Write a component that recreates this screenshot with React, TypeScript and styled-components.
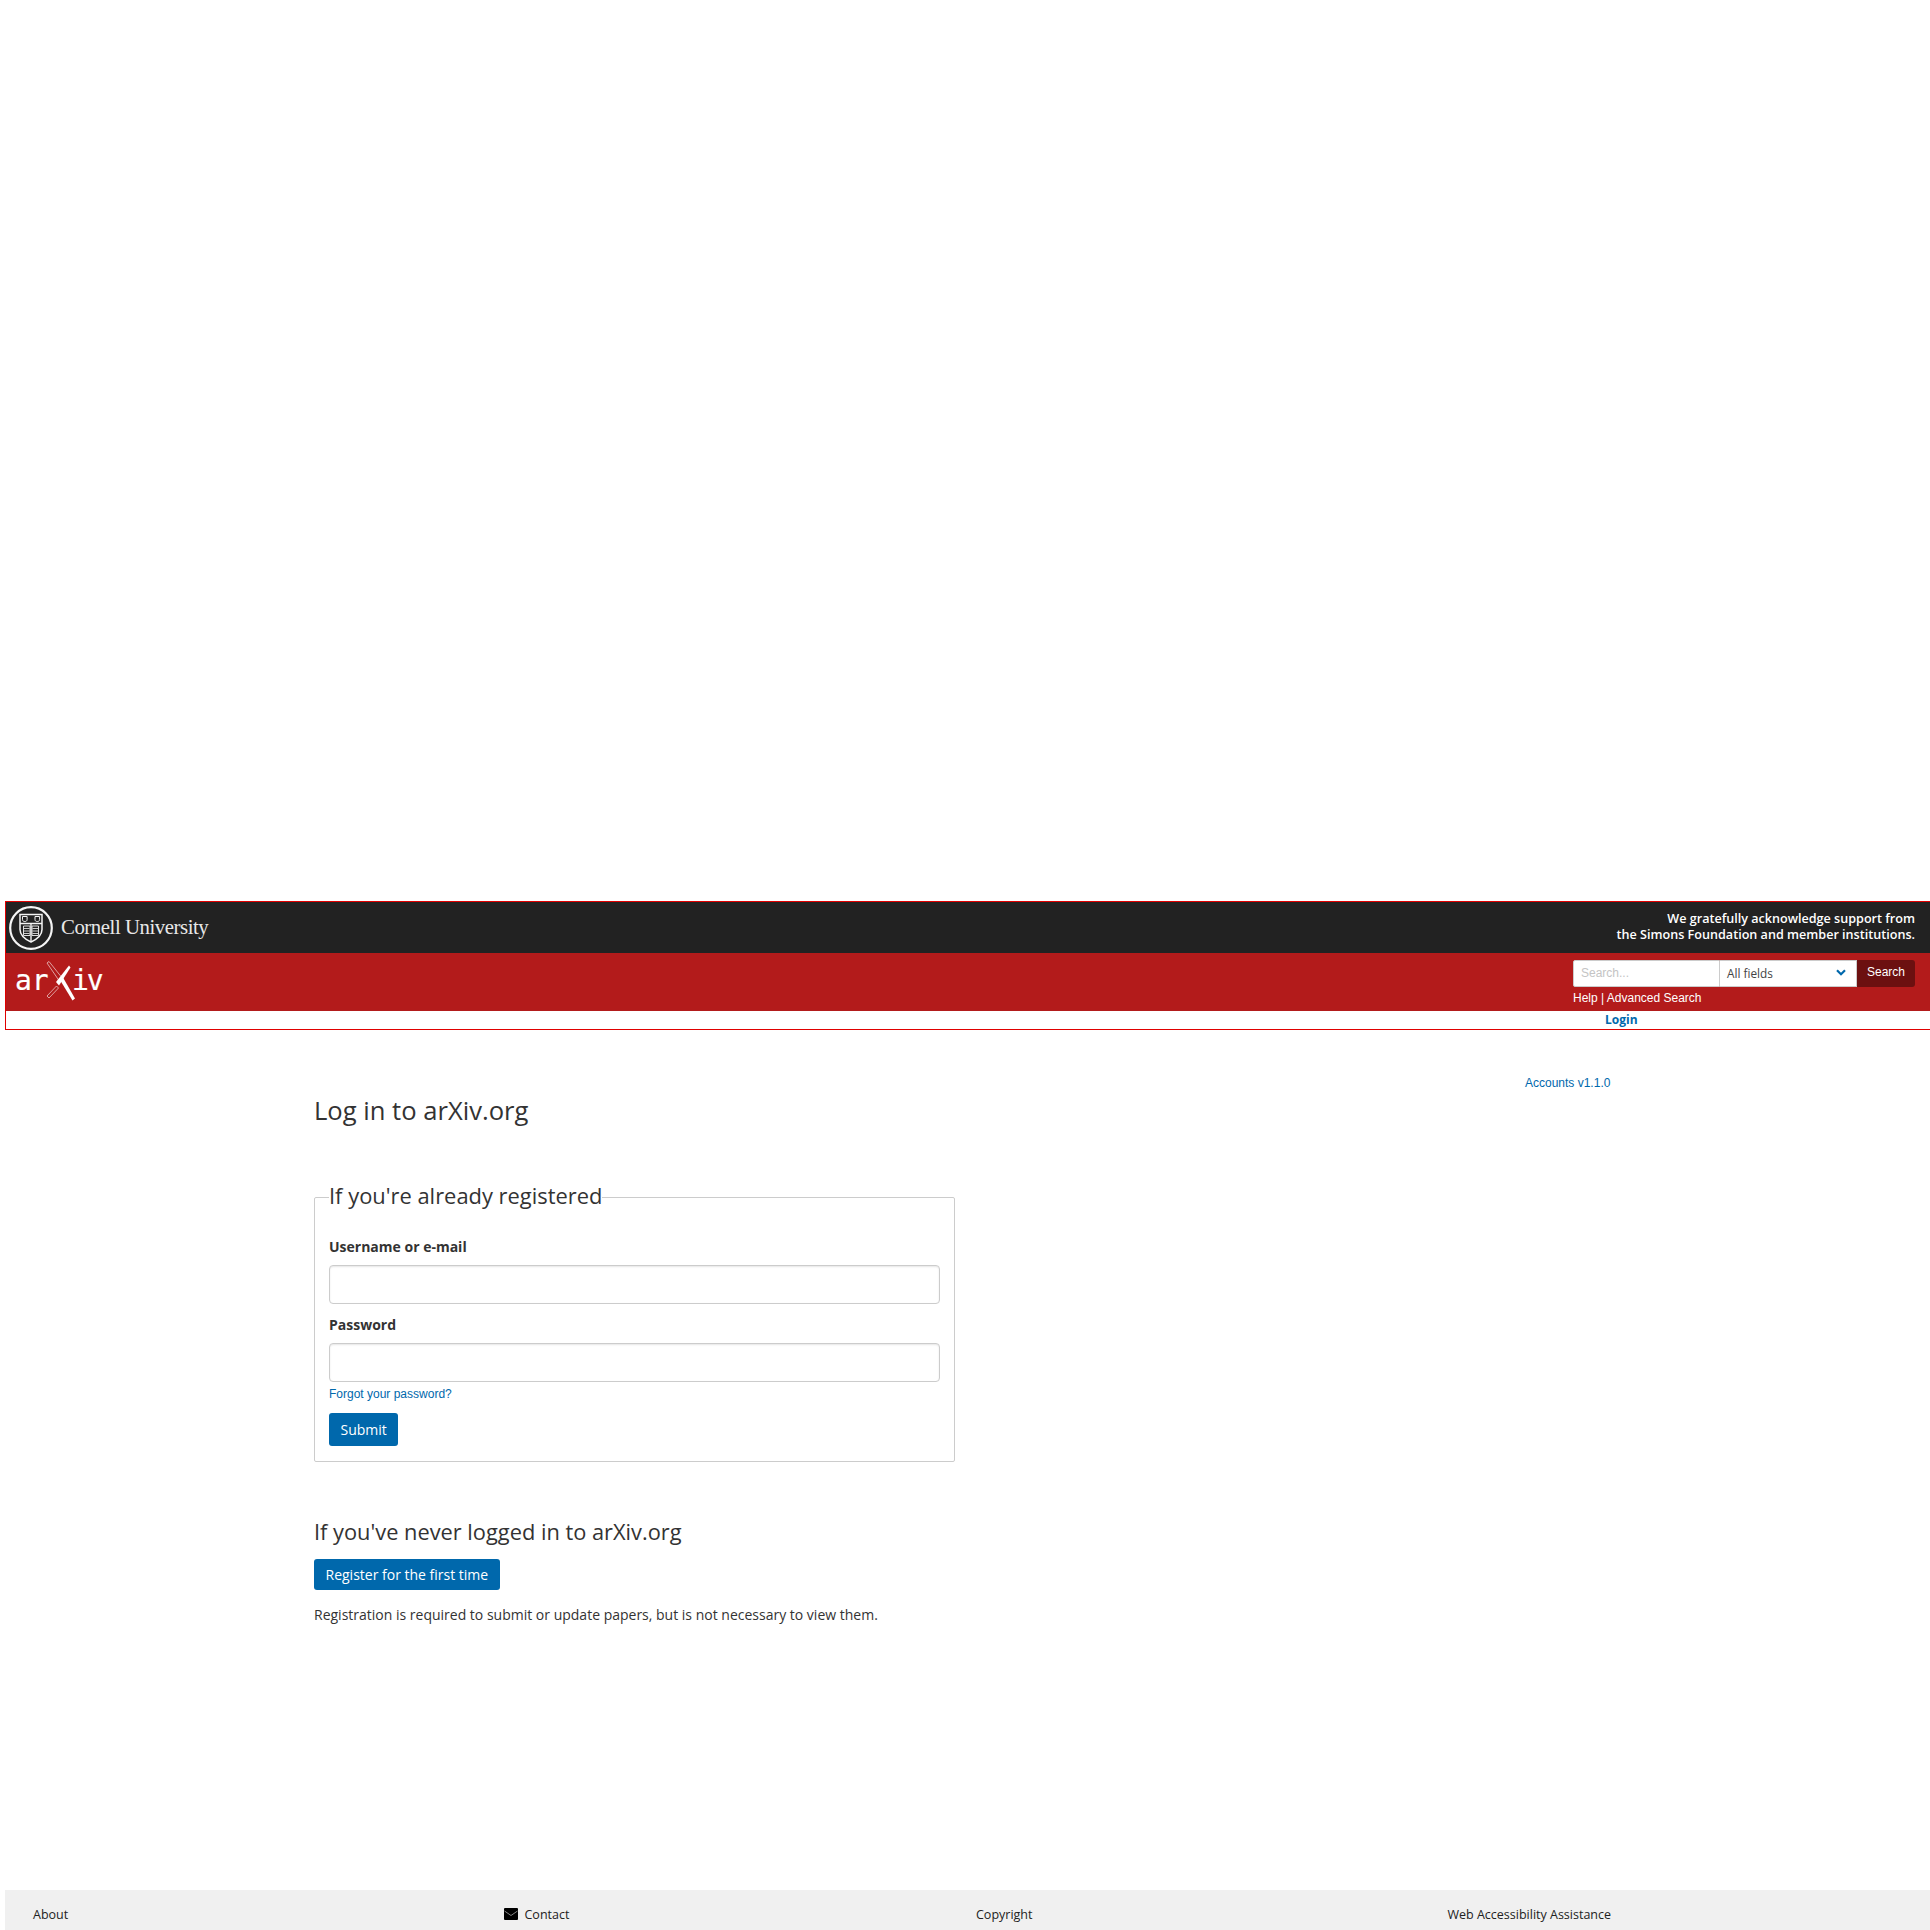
import React from 'react';
import styled, { createGlobalStyle } from 'styled-components';

const GlobalStyle = createGlobalStyle`
  html, body {
    margin: 0;
    padding: 0;
    background: #fff;
    overflow: hidden;
  }
  body {
    height: 1930px;
    font-family: "Open Sans", "Liberation Sans", sans-serif;
    color: #333;
  }
`;

const Page = styled.div`
  width: 1925px;
  height: 1930px;
  margin-left: 5px;
  padding-top: 901px;
  box-sizing: border-box;
  display: flex;
  flex-direction: column;
`;

const Header = styled.header`
  border: 1px solid #e00000;
  border-right: none;
`;

const TopBand = styled.div`
  height: 51px;
  background: #222;
  display: flex;
  justify-content: space-between;
  align-items: center;
  padding-right: 15px;
`;

const Cornell = styled.div`
  display: flex;
  align-items: center;
  gap: 7px;
  padding-left: 2px;
`;

const CornellName = styled.span`
  font-family: "Liberation Serif", serif;
  font-size: 20.8px;
  letter-spacing: -0.45px;
  color: #e8e8e8;
  padding-bottom: 2px;
`;

const Thanks = styled.div`
  color: #fff;
  font-size: 12.6px;
  font-weight: 600;
  line-height: 16px;
  text-align: right;
  padding-bottom: 1px;
`;

const RedBand = styled.div`
  height: 58px;
  background: #b31b1b;
  display: flex;
  justify-content: space-between;
  padding-right: 15px;
`;

const LogoSlot = styled.div`
  padding: 6px 0 0 6px;
`;

const SearchArea = styled.div`
  padding-top: 7px;
  width: 342px;
`;

const SearchRow = styled.div`
  display: flex;
  height: 27px;
`;

const SearchInput = styled.div`
  width: 147px;
  box-sizing: border-box;
  background: #fff;
  border: 1px solid #ccc;
  border-radius: 2px 0 0 2px;
  padding-left: 7px;
  font: 12px/25px "Liberation Sans", sans-serif;
  color: #c4c4c4;
`;

const FieldSelect = styled.div`
  width: 137px;
  box-sizing: border-box;
  background: #fff;
  border: 1px solid #ccc;
  border-left: none;
  padding: 0 10px 2px 7px;
  display: flex;
  align-items: center;
  justify-content: space-between;
  font-size: 11.8px;
  color: #444;
`;

const SearchButton = styled.div`
  width: 58px;
  background: #6c1010;
  border-radius: 0 3px 3px 0;
  color: #fff;
  font: 12px/24px "Liberation Sans", sans-serif;
  text-align: center;
`;

const SearchLinks = styled.div`
  margin-top: 4px;
  color: #fff;
  font: 12px/14px "Liberation Sans", sans-serif;
`;

const LoginBand = styled.div`
  height: 18px;
  padding-left: 1599px;
  font-size: 12px;
  font-weight: 700;
  line-height: 18px;
  color: #0068ac;
`;

const Main = styled.main`
  flex: 1;
  padding: 64px 0 0 309px;
  position: relative;
`;

const Version = styled.a`
  position: absolute;
  left: 1520px;
  top: 46px;
  font: 12px/14px "Liberation Sans", sans-serif;
  color: #0068ac;
`;

const Title = styled.h1`
  margin: 0;
  font-size: 25.6px;
  line-height: 34px;
  font-weight: 500;
  color: #333;
`;

const Panel = styled.fieldset`
  width: 641px;
  box-sizing: border-box;
  margin: 53px 0 0;
  padding: 0 14px 15px;
  border: 1px solid #ccc;
  border-radius: 2px;
`;

const PanelTitle = styled.legend`
  padding: 0 0 2px;
  font-size: 21.9px;
  line-height: 30px;
  font-weight: 500;
  color: #333;
`;

const FieldLabel = styled.label`
  display: block;
  margin-top: 24px;
  font-size: 14px;
  line-height: 20px;
  font-weight: 700;
  color: #333;

  & + div {
    margin-top: 8px;
  }
`;

const PasswordLabel = styled(FieldLabel)`
  margin-top: 11px;
`;

const TextBox = styled.div`
  height: 39px;
  box-sizing: border-box;
  border: 1px solid #ccc;
  border-radius: 4px;
  box-shadow: inset 0 1px 2px rgba(10, 10, 10, 0.1);
  background: #fff;
`;

const Forgot = styled.a`
  display: block;
  margin-top: 5px;
  font: 12px/14px "Liberation Sans", sans-serif;
  color: #0068ac;
`;

const BlueButton = styled.button`
  display: block;
  border: none;
  border-radius: 3px;
  background: #0068ac;
  color: #fff;
  font-family: "Open Sans", sans-serif;
  font-size: 14px;
  padding: 0 11.5px;
`;

const SubmitButton = styled(BlueButton)`
  height: 33px;
  margin-top: 12px;
`;

const RegisterHeading = styled.h2`
  margin: 55px 0 0;
  font-size: 21.8px;
  line-height: 30px;
  font-weight: 500;
  color: #333;
`;

const RegisterButton = styled(BlueButton)`
  height: 31px;
  margin-top: 12px;
`;

const Note = styled.p`
  margin: 15px 0 0;
  font-size: 14px;
  line-height: 20px;
  color: #333;
`;

const Footer = styled.footer`
  height: 40px;
  background: #f0f0f0;
  display: grid;
  grid-template-columns: repeat(4, 471.5px);
  padding-left: 28px;
`;

const FooterItem = styled.a`
  display: flex;
  align-items: center;
  gap: 7px;
  height: 100%;
  padding-top: 8px;
  box-sizing: border-box;
  font-size: 12.5px;
  color: #222;
`;

const EnvelopeIcon = styled.svg`
  width: 14px;
  height: 12px;
  margin-left: -1px;
`;

const CornellSeal = () => (
  <svg width="46" height="46" viewBox="0 0 46 46" fill="none" stroke="#f4f4f4">
    <circle cx="23" cy="23" r="20.800" strokeWidth="2.200" />
    <path d="M12 9.500h22v15c0 6-4.500 9.500-11 12.500-6.500-3-11-6.500-11-12.500z" strokeWidth="1.500" />
    <path d="M12 18.500h22M23 18.500v18" strokeWidth="1.400" />
    <path d="M14.500 11.500v3c0 1.500 1 2 2.300 2s2.300-.5 2.300-2v-3zM27 11.500v3c0 1.500 1 2 2.300 2s2.300-.5 2.300-2v-3z" strokeWidth="1" />
    <path d="M15.500 21h6.500v9.500h-6.500zM24 21h6.500v9.500h-6.500z" strokeWidth="0.900" />
    <path d="M16 23.500h5.500M16 26h5.500M16 28.500h5.500M24.500 23.500h5.500M24.500 26h5.500M24.500 28.500h5.500" strokeWidth="0.800" />
  </svg>
);

const ArxivLogo = () => (
  <svg width="96" height="46" viewBox="0 0 96 46" style={{ display: 'block' }}>
    <g fontFamily="'DejaVu Sans Mono', monospace" fontSize="28" fill="#fff" stroke="#fff" strokeWidth="0.200">
      <text x="3" y="31">ar</text>
      <text x="60" y="31" letterSpacing="-2">iv</text>
    </g>
    <path d="M35 4l2-1.500 14 17.500-3 3z" fill="#b31b1b" stroke="#e9c4c4" strokeWidth="0.800" />
    <path d="M48 21l3-2.500 12 21-2.500 2z" fill="#fff" />
    <path d="M57 6.500l1.500 2-11.500 18-3-3.500z" fill="#fff" />
    <path d="M44.500 27l2 2-9.500 10-2-2z" fill="#b31b1b" stroke="#e9c4c4" strokeWidth="0.800" />
  </svg>
);

const Chevron = () => (
  <svg width="10" height="7" viewBox="0 0 10 7">
    <path d="M1 1.200l4 4 4-4" fill="none" stroke="#0068ac" strokeWidth="2.200" />
  </svg>
);

const Envelope = () => (
  <EnvelopeIcon viewBox="0 0 14 12">
    <path d="M1 0h12a1 1 0 0 1 1 1v10a1 1 0 0 1-1 1H1a1 1 0 0 1-1-1V1a1 1 0 0 1 1-1z" fill="#000" />
    <path d="M.5 3l6.500 4.500L13.500 3" fill="none" stroke="#ddd" strokeWidth="0.600" />
  </EnvelopeIcon>
);

export default function App() {
  return (
    <Page>
      <GlobalStyle />
      <Header>
        <TopBand>
          <Cornell>
            <CornellSeal />
            <CornellName>Cornell University</CornellName>
          </Cornell>
          <Thanks>
            We gratefully acknowledge support from
            <br />
            the Simons Foundation and member institutions.
          </Thanks>
        </TopBand>
        <RedBand>
          <LogoSlot>
            <ArxivLogo />
          </LogoSlot>
          <SearchArea>
            <SearchRow>
              <SearchInput>Search...</SearchInput>
              <FieldSelect>
                All fields
                <Chevron />
              </FieldSelect>
              <SearchButton>Search</SearchButton>
            </SearchRow>
            <SearchLinks>Help | Advanced Search</SearchLinks>
          </SearchArea>
        </RedBand>
        <LoginBand>Login</LoginBand>
      </Header>
      <Main>
        <Version>Accounts v1.1.0</Version>
        <Title>Log in to arXiv.org</Title>
        <Panel>
          <PanelTitle>If you're already registered</PanelTitle>
          <FieldLabel>Username or e-mail</FieldLabel>
          <TextBox />
          <PasswordLabel>Password</PasswordLabel>
          <TextBox />
          <Forgot>Forgot your password?</Forgot>
          <SubmitButton>Submit</SubmitButton>
        </Panel>
        <RegisterHeading>If you've never logged in to arXiv.org</RegisterHeading>
        <RegisterButton>Register for the first time</RegisterButton>
        <Note>Registration is required to submit or update papers, but is not necessary to view them.</Note>
      </Main>
      <Footer>
        <FooterItem>About</FooterItem>
        <FooterItem>
          <Envelope />
          Contact
        </FooterItem>
        <FooterItem>Copyright</FooterItem>
        <FooterItem>Web Accessibility Assistance</FooterItem>
      </Footer>
    </Page>
  );
}
